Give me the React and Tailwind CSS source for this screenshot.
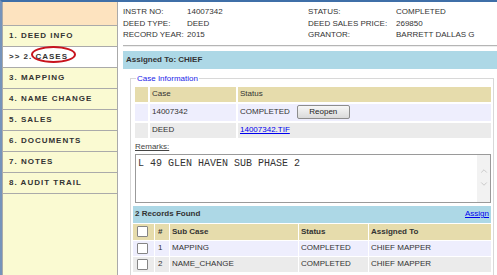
import { ChevronUp, ChevronDown } from 'lucide-react'

const NAV = ['1. DEED INFO', '2. CASES', '3. MAPPING', '4. NAME CHANGE', '5. SALES', '6. DOCUMENTS', '7. NOTES', '8. AUDIT TRAIL']

const INFO = [
    ['INSTR NO:', '14007342', 'STATUS:', 'COMPLETED'],
    ['DEED TYPE:', 'DEED', 'DEED SALES PRICE:', '269850'],
    ['RECORD YEAR:', '2015', 'GRANTOR:', 'BARRETT DALLAS G'],
]

const SUBCASES = [
    { n: 1, name: 'MAPPING', status: 'COMPLETED', to: 'CHIEF MAPPER', bg: 'bg-[#eeeefd]' },
    { n: 2, name: 'NAME_CHANGE', status: 'COMPLETED', to: 'CHIEF MAPPER', bg: 'bg-[#ebebeb]' },
]

function Box() {
    return <span className="block w-[11px] h-[11px] border border-[#858585] rounded-[1px] bg-white" />
}

function Sidebar() {
    return (
        <div className="w-[116px] shrink-0 flex flex-col bg-[#fafad2] border-l border-r border-[#aaa]">
            <div className="h-[24px] shrink-0 bg-[#fde3bf] border-b border-[#aaa]" />
            {NAV.map((label, i) => {
                const active = i === 1
                return (
                    <div key={label}
                        className={`h-[21px] shrink-0 flex items-center pl-[6px] border-b border-[#aaa] font-bold tracking-[1px] text-[8px] text-[#333] ${active ? 'bg-white' : ''}`}>
                        {active ? (
                            <>
                                <span>&gt;&gt; 2.&nbsp;</span>
                                <span className="relative">
                                    CASES
                                    {/* red marker circle drawn over the label */}
                                    <span className="absolute left-[-4px] top-[-5px] w-[45px] h-[17px] rounded-[50%] border-2 border-[#c8141e]" />
                                </span>
                            </>
                        ) : label}
                    </div>
                )
            })}
        </div>
    )
}

export default function App() {
    return (
        <div className="w-[497px] h-[275px] overflow-hidden bg-white flex border-t-2 border-t-[#3f6fa8] border-l-2 border-l-[#7593bb] font-['Liberation_Sans',Arial,sans-serif] text-[8px] text-[#222]">
            <Sidebar />

            <div className="flex-1 min-w-0 pl-[5px]">
                {/* deed summary */}
                <div className="grid grid-cols-[64px_121px_88px_1fr] leading-[11.5px] pt-[4px] text-[#333]">
                    {INFO.map(r => r.map((c, j) => <div key={r[0] + j}>{c}</div>))}
                </div>
                <div className="mt-[4px] h-[2px] border-t border-[#b5b5b5] border-b border-b-[#eee]" />

                <div className="mt-[4px] h-[18px] flex items-center pl-[3px] bg-[#add8e6] font-bold text-[#333]">
                    Assigned To: CHIEF
                </div>

                <fieldset className="mt-[5px] ml-[7px] mr-[3px] border border-[#d8d8d8] pl-[4px] pr-[2px] pb-[6px]">
                    <legend className="ml-[1px] px-[1px] text-[#2424e8] leading-[10px]">Case Information</legend>

                    <div className="mt-[3px] grid grid-cols-[13px_86px_1fr] gap-[2px] text-[#333]">
                        <div className="h-[15px] bg-[#e6dcac]" />
                        <div className="h-[15px] bg-[#e6dcac] flex items-center pl-[2px]">Case</div>
                        <div className="h-[15px] bg-[#e6dcac] flex items-center pl-[2px]">Status</div>

                        <div className="h-[17px] bg-[#eeeefd]" />
                        <div className="h-[17px] bg-[#eeeefd] flex items-center pl-[2px]">14007342</div>
                        <div className="h-[17px] bg-[#eeeefd] flex items-center pl-[2px] gap-[7px]">
                            COMPLETED
                            <button className="w-[53px] h-[14px] border border-[#8d8d8d] rounded-[2px] bg-linear-to-b from-[#f7f7f7] to-[#dadada] text-[8px] text-[#222]">
                                Reopen
                            </button>
                        </div>

                        <div className="h-[15px] bg-[#ebebeb]" />
                        <div className="h-[15px] bg-[#ebebeb] flex items-center pl-[2px]">DEED</div>
                        <div className="h-[15px] bg-[#ebebeb] flex items-center pl-[2px]">
                            <a className="text-[#0000ee] underline">14007342.TIF</a>
                        </div>
                    </div>

                    <div className="mt-[4px] text-[#444] underline leading-[10px]">Remarks:</div>
                    <div className="mt-[2px] h-[49px] flex border border-[#9a9a9a]">
                        <div className="flex-1 pl-[2px] pt-[1px] font-['Liberation_Mono','Courier_New',monospace] text-[10px] text-[#333]">
                            L 49 GLEN HAVEN SUB PHASE 2
                        </div>
                        <div className="w-[13px] bg-[#f2f2f2] flex flex-col items-center pt-[11px] gap-[3px] text-[#b0b0b0]">
                            <ChevronUp size={10} strokeWidth={1.5} />
                            <ChevronDown size={10} strokeWidth={1.5} />
                        </div>
                    </div>

                    {/* sub cases */}
                    <div className="mt-[3px] ml-[-2px]">
                        <div className="h-[17px] flex items-center justify-between px-[2px] bg-[#add8e6] font-bold text-[#333]">
                            <span>2 Records Found</span>
                            <a className="text-[#0000ee] underline font-normal">Assign</a>
                        </div>
                        <div className="mt-[1px] grid grid-cols-[21px_14px_128px_69px_1fr] gap-[1px] text-[#333]">
                            <div className="h-[16px] bg-[#e6dcac] flex items-center pl-[4px]"><Box /></div>
                            <div className="h-[16px] bg-[#e6dcac] flex items-center pl-[3px] font-bold">#</div>
                            <div className="h-[16px] bg-[#e6dcac] flex items-center pl-[2px] font-bold">Sub Case</div>
                            <div className="h-[16px] bg-[#e6dcac] flex items-center pl-[2px] font-bold">Status</div>
                            <div className="h-[16px] bg-[#e6dcac] flex items-center pl-[2px] font-bold">Assigned To</div>
                            {SUBCASES.map(s => (
                                <div key={s.n} className="contents">
                                    <div className={`h-[15px] ${s.bg} flex items-center pl-[4px]`}><Box /></div>
                                    <div className={`h-[15px] ${s.bg} flex items-center pl-[3px]`}>{s.n}</div>
                                    <div className={`h-[15px] ${s.bg} flex items-center pl-[2px]`}>{s.name}</div>
                                    <div className={`h-[15px] ${s.bg} flex items-center pl-[2px]`}>{s.status}</div>
                                    <div className={`h-[15px] ${s.bg} flex items-center pl-[2px]`}>{s.to}</div>
                                </div>
                            ))}
                        </div>
                    </div>
                </fieldset>
            </div>
        </div>
    )
}
